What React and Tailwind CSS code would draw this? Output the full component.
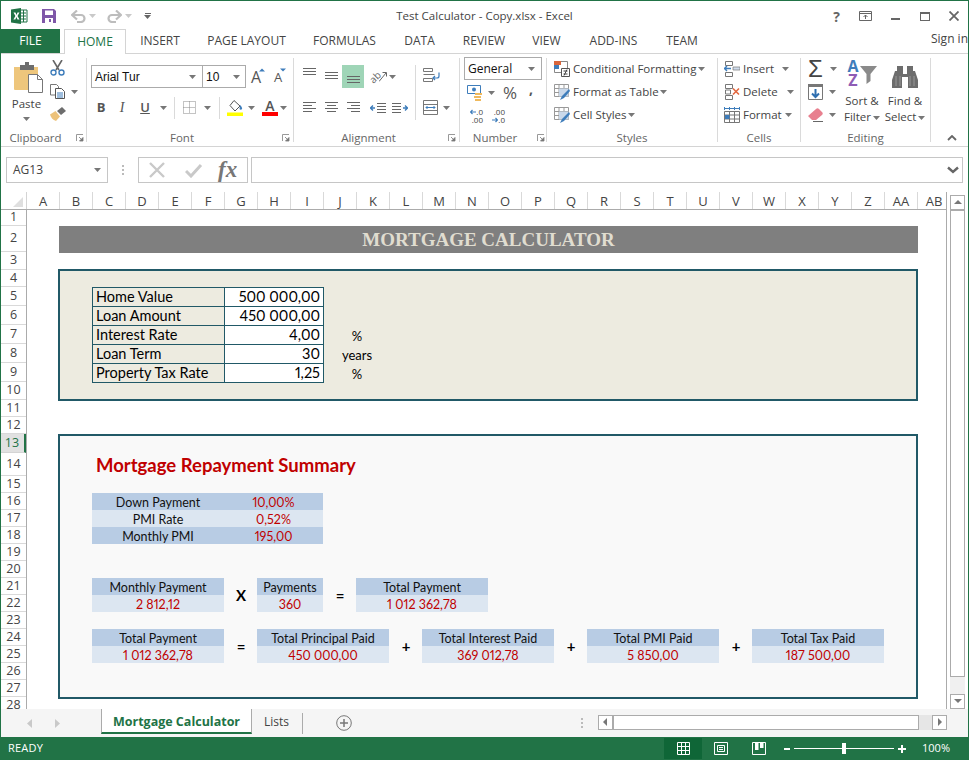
import React from "react";

const uiFont = "font-['Open_Sans','Noto_Sans',sans-serif]";
const cellFont = "font-['Lato','Noto_Sans',sans-serif]";

const Caret = ({ className = "", color = "#777" }) => (
  <svg width="7" height="4" viewBox="0 0 7 4" className={className}>
    <path d="M0 0h7L3.5 4z" fill={color} />
  </svg>
);

// horizontal text-lines icon used by the alignment buttons
const Lines = ({ rows, color = "#666", width = 15, height = 13 }) => (
  <svg width={width} height={height} viewBox={`0 0 ${width} ${height}`}>
    {rows.map(([x1, x2, y], i) => (
      <line key={i} x1={x1} x2={x2} y1={y + 0.5} y2={y + 0.5} stroke={color} />
    ))}
  </svg>
);

const Launcher = () => (
  <svg width="8" height="8" viewBox="0 0 8 8" className="shrink-0">
    <path d="M0.5 7V0.5H7" fill="none" stroke="#999" />
    <path d="M3 3l3 3M7 3.5V7H3.5z" fill="#777" stroke="#777" strokeWidth="0.8" />
  </svg>
);

const Group = ({ width, label, children, launcher = true, launcherClass = "pr-[3px]" }) => (
  <div className={`flex flex-col h-[92px] shrink-0 ${width}`}>
    <div className="h-[75px]">{children}</div>
    <div className={`relative h-[17px] flex items-center justify-center text-[11.5px] text-[#666] ${launcher ? "pr-[16px]" : ""}`}>
      {label}
      {launcher && <div className={`absolute right-0 top-[5px] flex ${launcherClass}`}><Launcher /></div>}
    </div>
  </div>
);

const Sep = () => <div className="w-px h-[84px] mt-[4px] bg-[#dadada] shrink-0" />;

const ExcelLogo = () => (
  <svg width="17" height="16" viewBox="0 0 17 16">
    <path d="M9 2h7v12H9z" fill="#fff" stroke="#217346" />
    <path d="M10 5h5M10 8h5M10 11h5M12.5 2v12" stroke="#217346" />
    <path d="M0 1.5 10 0v16L0 14.5z" fill="#217346" />
    <path d="M2.5 4.5h2L5.5 7l1-2.5h2L6.5 8l2 3.5h-2L5.4 9l-1 2.5h-2l2-3.5z" fill="#fff" />
  </svg>
);

const SaveIcon = () => (
  <svg width="14" height="14" viewBox="0 0 14 14">
    <path d="M0 0h12l2 2v12H0z" fill="#7f57a8" />
    <path d="M3 1.5h8v4.5H3z" fill="#fff" />
    <path d="M3 9h8v5H3z" fill="#fff" />
    <path d="M7 10h2v3H7z" fill="#7f57a8" />
  </svg>
);

const Undo = ({ flip }) => (
  <svg width="15" height="13" viewBox="0 0 15 13" className={flip ? "-scale-x-100" : ""}>
    <path d="M2 5h8a3.3 3.3 0 0 1 0 7H6" fill="none" stroke="#bdbdbd" strokeWidth="2.2" />
    <path d="M6 0.5 1 5l5 4.5" fill="none" stroke="#bdbdbd" strokeWidth="2.2" />
  </svg>
);

const PasteIcon = () => (
  <svg width="29" height="31" viewBox="0 0 29 31">
    <path d="M0 5h24v22a1 1 0 0 1-1 1H1a1 1 0 0 1-1-1z" fill="#eec67c" />
    <path d="M6 3h5V0h4v3h5v5H6z" fill="#6d6d6d" />
    <path d="M14.5 12.5h9l5 5v13h-14z" fill="#fff" stroke="#777" />
    <path d="M23.5 12.5v5h5" fill="none" stroke="#777" />
  </svg>
);

const CutIcon = () => (
  <svg width="15" height="16" viewBox="0 0 15 16">
    <path d="M3 0l6 10M12 0 6 10" stroke="#666" strokeWidth="1.6" fill="none" />
    <circle cx="3.5" cy="12.5" r="2.5" fill="none" stroke="#3e7dbb" strokeWidth="1.4" />
    <circle cx="11.5" cy="12.5" r="2.5" fill="none" stroke="#3e7dbb" strokeWidth="1.4" />
  </svg>
);

const CopyIcon = () => (
  <svg width="15" height="15" viewBox="0 0 15 15">
    <path d="M0.5 0.5h6l2 2V11h-8z" fill="#fff" stroke="#777" />
    <path d="M5.5 4.5h6l3 3v7h-9z" fill="#fff" stroke="#555" />
    <path d="M7 9h6M7 11h6M7 13h6" stroke="#3e7dbb" />
  </svg>
);

const PainterIcon = () => (
  <svg width="16" height="14" viewBox="0 0 16 14">
    <path d="M0 7.5 5.5 4 10 9.5 6 14C3 13 1 11 0 7.5z" fill="#edc27a" />
    <path d="M7 4l5-4 4 4-5 4z" fill="#6d6d6d" />
  </svg>
);

const GrowFont = ({ up }) => (
  <div className="flex items-start w-[18px] h-[18px]">
    <span className={up ? "text-[16px] leading-[20px] text-[#555]" : "text-[13px] leading-[21px] pl-[1px] text-[#555]"}>A</span>
    <svg width="6" height="4" viewBox="0 0 6 4" className="-ml-[2px] mt-[1px]">
      <path d={up ? "M0 3.5 3 0.5 6 3.5z" : "M0 0.5h6L3 3.5z"} fill="#3e7dbb" />
    </svg>
  </div>
);

const BordersIcon = () => (
  <svg width="13" height="13" viewBox="0 0 13 13">
    <path d="M0.5 0.5h12v12h-12zM6.5 0.5v12M0.5 6.5h12" fill="none" stroke="#888" strokeDasharray="1 1" />
  </svg>
);

const FillIcon = () => (
  <svg width="16" height="16" viewBox="0 0 16 16">
    <path d="M7 0.5 13 6l-5 5-5-5.5z" fill="#fff" stroke="#555" />
    <path d="M13 5c1.5 1.5 2.5 3 2 4s-2 1-2.5 0z" fill="#3e7dbb" />
    <path d="M0 12.5h16V16H0z" fill="#ffff00" />
  </svg>
);

const FontColorIcon = () => (
  <div className="w-[16px] flex flex-col items-center">
    <span className="h-[13px] text-[14px] leading-[13px] font-semibold text-[#555]">A</span>
    <div className="w-[16px] h-[4px] bg-[#ff0000]" />
  </div>
);

const OrientIcon = () => (
  <div className="flex items-center w-[18px] h-[18px]">
    <span className="-rotate-45 text-[10px] leading-[10px] text-[#666]">ab</span>
    <svg width="8" height="11" viewBox="0 0 8 11" className="-ml-[2px]">
      <path d="M0 10.5 7 2M3.500 1.500H7.500V5.500" fill="none" stroke="#666" />
    </svg>
  </div>
);

const WrapIcon = () => (
  <svg width="17" height="15" viewBox="0 0 17 15">
    <path d="M0.5 0.5h9v3h-9zM0.5 6.5h11M0.5 10.5h9v3h-9z" fill="none" stroke="#777" />
    <path d="M16 4.5V8a2 2 0 0 1-2 2H10M12 8l-2 2 2 2" fill="none" stroke="#3e7dbb" strokeWidth="1.2" />
  </svg>
);

const MergeIcon = () => (
  <svg width="15" height="15" viewBox="0 0 15 15">
    <path d="M0.5 0.5h14v14H0.5zM0.5 4.5h14M0.5 10.5h14" fill="none" stroke="#777" />
    <path d="M3 7.5h9M4.5 6l-1.5 1.5L4.5 9M10.5 6 12 7.5 10.5 9" fill="none" stroke="#3e7dbb" />
  </svg>
);

const IndentIcon = ({ flip }) => (
  <svg width="16" height="10" viewBox="0 0 16 10" className={flip ? "-scale-x-100" : ""}>
    <path d="M7 0.5h9M7 3.5h9M7 6.5h9M7 9.5h9" stroke="#666" fill="none" />
    <path d="M0 5h5M3 2.5 0.5 5 3 7.5" fill="none" stroke="#3e7dbb" strokeWidth="1.4" />
  </svg>
);

const AccountingIcon = () => (
  <svg width="16" height="16" viewBox="0 0 16 16">
    <path d="M0.5 0.5h13v8h-13z" fill="#fff" stroke="#3e7dbb" />
    <circle cx="7" cy="4.5" r="2" fill="#3e7dbb" />
    <path d="M8 8h7v2H8zM7 11h7v2H7zM8 14h6v2H8z" fill="#efb95d" />
  </svg>
);

const DecimalArrow = ({ right }) => (
  <svg width="6" height="6" viewBox="0 0 6 6" className="shrink-0">
    <path d={right ? "M0 3h5.500M3.500 1 5.500 3 3.500 5" : "M0.500 3H6M2.500 1 0.500 3 2.500 5"} fill="none" stroke="#3e7dbb" strokeWidth="1.2" />
  </svg>
);

const DecimalIcon = ({ more }) => (
  <div className="w-[16px] text-[8px] leading-[8px] text-[#444]">
    <div className="flex items-center justify-end h-[8px]">
      {!more && <DecimalArrow />}
      <span>{more ? ".00" : ".0"}</span>
    </div>
    <div className="flex items-center justify-end h-[8px]">
      {more && <DecimalArrow right />}
      <span>{more ? ".0" : ".00"}</span>
    </div>
  </div>
);

const CondFormatIcon = () => (
  <svg width="16" height="16" viewBox="0 0 16 16">
    <path d="M0.5 0.5h13v11h-13z" fill="#fff" stroke="#888" />
    <path d="M0 0h7v4H0z" fill="#d9663c" />
    <path d="M0 4h5v4H0z" fill="#3e7dbb" />
    <path d="M7.5 7.5h8v8h-8z" fill="#fff" stroke="#555" />
    <path d="M9.5 10h4M9.5 13h4M10 14.5l3-6" stroke="#444" fill="none" />
  </svg>
);

const TableStyleIcon = () => (
  <svg width="16" height="16" viewBox="0 0 16 16">
    <path d="M0.5 0.5h14v12h-14zM0.5 4.5h14M0.5 8.5h14M5 0.5v12M10 0.5v12" fill="#fff" stroke="#999" />
    <path d="M5 4.5h9.5v8H5z" fill="#c9d8ea" />
    <path d="M15 5 8 12l-2 4 4-2 6-7z" fill="#3e7dbb" />
  </svg>
);

const InsertCellIcon = () => (
  <svg width="16" height="16" viewBox="0 0 16 16">
    <path d="M1.5 0.5h7v4h-7zM1.5 11.5h7v4h-7z" fill="#fff" stroke="#777" />
    <path d="M9 6h7v3H9z" fill="#cfdcec" stroke="#777" strokeWidth="0.7" />
    <path d="M0 7.5h7M3 5 0.5 7.5 3 10" fill="none" stroke="#3e7dbb" strokeWidth="1.4" />
  </svg>
);

const DeleteCellIcon = () => (
  <svg width="16" height="16" viewBox="0 0 16 16">
    <path d="M1.5 0.5h7v4h-7zM1.5 11.5h7v4h-7zM1.5 6h5v4h-5z" fill="#fff" stroke="#777" />
    <path d="M9 4.5l6 6M15 4.5l-6 6" stroke="#e2673f" strokeWidth="1.6" />
  </svg>
);

const FormatCellIcon = () => (
  <svg width="16" height="16" viewBox="0 0 16 16">
    <path d="M0.5 4.5h15v11h-15zM0.5 8h15M0.5 12h15M5.5 4.5v11M10.5 4.5v11" fill="#fff" stroke="#777" />
    <path d="M1 8h4.500v4H1z" fill="#3e7dbb" />
    <path d="M0.5 0v3M5.5 0v3M10.5 0v3M15.5 0v3M1 1.5h14" stroke="#3e7dbb" fill="none" />
  </svg>
);

const FillDownIcon = () => (
  <svg width="15" height="16" viewBox="0 0 15 16">
    <path d="M0.5 0.5h14v15h-14z" fill="#fff" stroke="#777" />
    <path d="M0 0h15v3H0z" fill="#777" />
    <path d="M7.5 5v8M4 9.5l3.5 3.5L11 9.5" fill="none" stroke="#2f6fb0" strokeWidth="2" />
  </svg>
);

const EraserIcon = () => (
  <svg width="16" height="14" viewBox="0 0 16 14">
    <path d="M0 8 8 1c1-1 2-1 3 0l3 3c1 1 1 2 0 3l-6 5H4z" fill="#e8808f" />
    <path d="M5 13.5h10" stroke="#666" />
  </svg>
);

const SortFilterIcon = () => (
  <div className="flex h-[29px] w-[30px]">
    <div className="w-[12px] flex flex-col items-center font-bold text-[16px] leading-[14px]">
      <span className="text-[#3e7dbb]">A</span>
      <span className="text-[#8e5cb5]">Z</span>
    </div>
    <svg width="17" height="18" viewBox="0 0 17 18" className="mt-[7px] ml-[1px]">
      <path d="M0 0h17l-6.500 8v7l-4 3V8z" fill="#8a8a8a" />
    </svg>
  </div>
);

const BinocularsIcon = () => (
  <svg width="26" height="24" viewBox="0 0 26 24">
    <path d="M5 2h6v5H5zM15 2h6v5h-6zM3 7h8v3h4V7h8l3 9v8H16V13h-6v11H0v-8z" fill="#6d6d6d" />
    <path d="M4 12v10M8 12v10M18 12v10M22 12v10" stroke="#999" />
  </svg>
);

const SmallCross = ({ color = "#c9c9c9" }) => (
  <svg width="16" height="16" viewBox="0 0 16 16">
    <path d="M1 1l14 14M15 1 1 15" stroke={color} strokeWidth="2.4" />
  </svg>
);

const ScrollBtn = ({ dir, className = "" }) => {
  const shapes = {
    up: "M1 6 5 2l4 4z",
    down: "M1 2h8L5 6z",
    left: "M6 1v8L2 5z",
    right: "M3 1v8l4-4z",
  };
  return (
    <div className={`w-[15px] h-[15px] shrink-0 border border-[#ababab] bg-white flex items-center justify-center ${className}`}>
      <svg width="10" height="10" viewBox="0 0 10 10"><path d={shapes[dir]} fill="#777" /></svg>
    </div>
  );
};

const tabs = [
  ["INSERT", "w-[68px]"],
  ["PAGE LAYOUT", "w-[105px]"],
  ["FORMULAS", "w-[91px]"],
  ["DATA", "w-[59px]"],
  ["REVIEW", "w-[70px]"],
  ["VIEW", "w-[55px]"],
  ["ADD-INS", "w-[79px]"],
  ["TEAM", "w-[58px]"],
];

const columns = ["A", "B", "C", "D", "E", "F", "G", "H", "I", "J", "K", "L", "M", "N", "O", "P", "Q", "R", "S", "T", "U", "V", "W", "X", "Y", "Z", "AA", "AB"];

const rowHeights = [16, 26, 18, 17, 19, 19, 19, 19, 19, 18, 17, 17, 19, 23, 17, 17, 17, 17, 17, 17, 17, 17, 17, 17, 17, 17, 17, 17];

const inputs = [
  ["Home Value", "500 000,00", ""],
  ["Loan Amount", "450 000,00", ""],
  ["Interest Rate", "4,00", "%"],
  ["Loan Term", "30", "years"],
  ["Property Tax Rate", "1,25", "%"],
];

const summary = [
  ["Down Payment", "10,00%", "bg-[#b8cce4]"],
  ["PMI Rate", "0,52%", "bg-[#dce6f1]"],
  ["Monthly PMI", "195,00", "bg-[#b8cce4]"],
];

const Block = ({ title, value, width = "w-[132px]" }) => (
  <div className={`${width} shrink-0 text-center text-[12.5px] proportional-nums`}>
    <div className="h-[17px] bg-[#b8cce4] text-[#111] leading-[20px]">{title}</div>
    <div className="h-[17px] bg-[#dce6f1] text-[#c00000] leading-[19px]">{value}</div>
  </div>
);

const Op = ({ children }) => (
  <div className="w-[33px] shrink-0 flex items-center justify-center pl-[1px] text-[15px] font-bold text-black">{children}</div>
);

function Ribbon() {
  return (
    <div className="flex h-[93px] border-b border-[#d4d4d4] text-[#444] text-[11.5px]">
      <Group width="w-[85px]" label="Clipboard" launcherClass="pr-[2px]">
        <div className="flex">
          <div className="w-[48px] flex flex-col pt-[8px]">
            <div className="pl-[13px]"><PasteIcon /></div>
            <div className="mt-[3px] leading-[16px] text-center pl-[3px]">Paste</div>
            <div className="flex justify-center pl-[3px]"><Caret className="mt-[5px]" /></div>
          </div>
          <div className="flex flex-col pt-[6px] pl-[1px]">
            <div className="h-[24px]"><CutIcon /></div>
            <div className="h-[23px] flex items-start gap-[3px]"><CopyIcon /><Caret className="ml-[3px] mt-[6px]" /></div>
            <div className="h-[23px]"><PainterIcon /></div>
          </div>
        </div>
      </Group>
      <Sep />
      <Group width="w-[206px]" label="Font">
        <div className="flex pt-[11px] pl-[4px] h-[34px]">
          <div className="w-[112px] h-[23px] border border-[#ababab] flex items-center justify-between pl-[3px] pr-[6px] text-[#111] text-[12px]">
            <span className="font-['Liberation_Sans',sans-serif]">Arial Tur</span><Caret />
          </div>
          <div className="w-[43px] h-[23px] border border-l-0 border-[#ababab] flex items-center justify-between pl-[3px] pr-[5px] text-[#111] text-[12px]">
            <span className="font-['Liberation_Sans',sans-serif]">10</span><Caret />
          </div>
          <div className="ml-[5px] pt-[2px]"><GrowFont up /></div>
          <div className="ml-[4px] pt-[2px]"><GrowFont /></div>
        </div>
        <div className="flex items-center h-[23px] mt-[8px] pl-[4px]">
          <div className="w-[20px] text-center font-bold text-[13px] text-[#555]">B</div>
          <div className="w-[22px] text-center italic text-[14px] text-[#555] font-['Liberation_Serif',serif]">I</div>
          <div className="w-[24px] text-center underline text-[13px] text-[#555] font-semibold">U</div>
          <Caret className="ml-[3px]" />
          <div className="w-px h-[22px] bg-[#dadada] ml-[7px]" />
          <div className="ml-[8px]"><BordersIcon /></div>
          <Caret className="ml-[8px]" />
          <div className="w-px h-[22px] bg-[#dadada] ml-[8px]" />
          <div className="ml-[7px]"><FillIcon /></div>
          <Caret className="ml-[5px]" />
          <div className="ml-[7px]"><FontColorIcon /></div>
          <Caret className="ml-[2px]" />
        </div>
      </Group>
      <Sep />
      <Group width="w-[165px]" label="Alignment">
        <div className="flex pt-[11px] pl-[4px] h-[34px]">
          <div className="w-[22px] h-[23px] flex justify-center pt-[3px]"><Lines rows={[[1, 14, 0], [1, 14, 3], [1, 14, 6]]} /></div>
          <div className="w-[22px] h-[23px] flex justify-center pt-[5px]"><Lines rows={[[1, 14, 2], [1, 14, 5], [1, 14, 8]]} /></div>
          <div className="w-[22px] h-[23px] flex justify-center pt-[8px] bg-[#9fd5b7]"><Lines rows={[[1, 14, 3], [1, 14, 6], [1, 14, 9]]} /></div>
          <div className="w-[36px] h-[23px] flex items-center pl-[5px] gap-[2px]"><OrientIcon /><Caret /></div>
          <div className="w-px h-[55px] bg-[#dadada] ml-[15px]" />
          <div className="ml-[7px] pt-[3px]"><WrapIcon /></div>
        </div>
        <div className="flex items-center h-[23px] mt-[8px] pl-[4px]">
          <div className="w-[22px] flex justify-center"><Lines rows={[[1, 14, 1], [1, 10, 4], [1, 14, 7], [1, 10, 10]]} /></div>
          <div className="w-[22px] flex justify-center"><Lines rows={[[1, 14, 1], [3, 12, 4], [1, 14, 7], [3, 12, 10]]} /></div>
          <div className="w-[22px] flex justify-center"><Lines rows={[[1, 14, 1], [5, 14, 4], [1, 14, 7], [5, 14, 10]]} /></div>
          <div className="ml-[6px]"><IndentIcon /></div>
          <div className="ml-[6px]"><IndentIcon flip /></div>
          <div className="ml-[15px]"><MergeIcon /></div>
          <Caret className="ml-[5px]" />
        </div>
      </Group>
      <Sep />
      <Group width="w-[86px]" label="Number" launcherClass="pr-[1px]">
        <div className="pt-[3px] pl-[4px]">
          <div className="w-[78px] h-[23px] border border-[#ababab] flex items-center justify-between pl-[3px] pr-[6px] text-[#111] text-[12px]">
            General<Caret />
          </div>
          <div className="flex items-center h-[23px] mt-[1px] pl-[3px]">
            <AccountingIcon />
            <Caret className="ml-[5px]" />
            <span className="ml-[8px] text-[17px] text-[#555]">%</span>
            <span className="ml-[12px] text-[14px] font-bold text-[#555] leading-[10px] -mt-[8px]">,</span>
          </div>
          <div className="flex items-center h-[23px] pl-[3px]">
            <DecimalIcon />
            <div className="ml-[6px]"><DecimalIcon more /></div>
          </div>
        </div>
      </Group>
      <Sep />
      <Group width="w-[170px]" label="Styles" launcher={false}>
        <div className="pt-[3px] pl-[7px] text-[11.5px]">
          <div className="flex items-center h-[23px] gap-[3px]"><CondFormatIcon />Conditional Formatting<Caret className="-ml-[1px]" /></div>
          <div className="flex items-center h-[23px] gap-[3px]"><TableStyleIcon />Format as Table<Caret className="-ml-[2px]" /></div>
          <div className="flex items-center h-[23px] gap-[3px]"><TableStyleIcon />Cell Styles<Caret className="-ml-[2px]" /></div>
        </div>
      </Group>
      <Sep />
      <Group width="w-[82px]" label="Cells" launcher={false}>
        <div className="pt-[3px] pl-[6px]">
          <div className="flex items-center h-[23px] gap-[3px]"><InsertCellIcon />Insert<Caret className="ml-[5px]" /></div>
          <div className="flex items-center h-[23px] gap-[3px]"><DeleteCellIcon />Delete<Caret className="ml-[6px]" /></div>
          <div className="flex items-center h-[23px] gap-[3px]"><FormatCellIcon />Format<Caret className="ml-0" /></div>
        </div>
      </Group>
      <Sep />
      <Group width="w-[129px]" label="Editing" launcher={false}>
        <div className="flex pl-[7px] pt-[3px]">
          <div className="flex flex-col w-[33px]">
            <div className="flex items-center h-[23px] gap-[6px]"><span className="text-[24px] leading-[21px] w-[16px] text-[#444] font-['Liberation_Sans',sans-serif]">Σ</span><Caret /></div>
            <div className="flex items-center h-[23px] gap-[6px]"><FillDownIcon /><Caret /></div>
            <div className="flex items-center h-[23px] gap-[5px]"><EraserIcon /><Caret /></div>
          </div>
          <div className="w-[42px] flex flex-col items-center">
            <div className="mt-[2px]"><SortFilterIcon /></div>
            <div className="text-center leading-[16px] mt-[5px] whitespace-nowrap">Sort &amp;<br />Filter<Caret className="inline ml-[2px]" /></div>
          </div>
          <div className="w-[44px] flex flex-col items-center">
            <div className="mt-[7px]"><BinocularsIcon /></div>
            <div className="text-center leading-[16px] mt-[5px] whitespace-nowrap">Find &amp;<br />Select<Caret className="inline ml-[2px]" /></div>
          </div>
        </div>
      </Group>
      <Sep />
      <div className="flex-1 flex justify-center items-end pb-[5px] pl-[4px]">
        <svg width="10" height="6" viewBox="0 0 10 6"><path d="M1 5l4-4 4 4" fill="none" stroke="#666" strokeWidth="1.8" /></svg>
      </div>
    </div>
  );
}

function FormulaBar() {
  return (
    <div className="flex h-[26px] mt-[10px] pl-[5px] pr-[5px] text-[#444]">
      <div className="w-[102px] border border-[#c6c6c6] flex items-center justify-between pl-[6px] pr-[6px] text-[12px]">
        AG13<Caret />
      </div>
      <div className="w-[30px] flex flex-col items-center justify-center gap-[2px]">
        <div className="w-[2px] h-[2px] bg-[#bbb]" />
        <div className="w-[2px] h-[2px] bg-[#bbb]" />
        <div className="w-[2px] h-[2px] bg-[#bbb]" />
      </div>
      <div className="w-[110px] border border-[#c6c6c6] flex items-center pl-[10px]">
        <SmallCross />
        <svg width="18" height="15" viewBox="0 0 18 15" className="ml-[20px]">
          <path d="M1 8l5 5L16 2" fill="none" stroke="#c9c9c9" strokeWidth="3" />
        </svg>
        <span className="ml-[15px] italic font-bold text-[23px] leading-[20px] text-[#777] font-['Liberation_Serif',serif]">fx</span>
      </div>
      <div className="flex-1 ml-[3px] border border-[#c6c6c6] flex items-center justify-end pr-[3px]">
        <svg width="12" height="8" viewBox="0 0 12 8"><path d="M1 1.5l5 4.5 5-4.5" fill="none" stroke="#666" strokeWidth="2.4" /></svg>
      </div>
    </div>
  );
}

function Sheet() {
  return (
    <div className="flex h-[517px] mt-[9px]">
      <div className="flex-1 min-w-0 flex flex-col overflow-hidden border-r border-[#ababab]">
        <div className="flex h-[18px] shrink-0 border-b border-[#ababab]">
          <div className="w-[26px] shrink-0 border-r border-[#d4d4d4] relative">
            <svg width="10" height="10" viewBox="0 0 10 10" className="absolute right-[3px] bottom-[2px]"><path d="M10 0v10H0z" fill="#dfdfdf" /></svg>
          </div>
          {columns.map((c) => (
            <div key={c} className="w-[33px] shrink-0 border-r border-[#d9d9d9] text-center text-[13px] leading-[18px] text-[#444]">{c}</div>
          ))}
        </div>
        <div className="flex flex-1 min-h-0 overflow-hidden">
          <div className="w-[26px] shrink-0 border-r border-[#ababab]">
            {rowHeights.map((h, i) => (
              <div
                key={i}
                style={{ height: h }}
                className={
                  i === 12
                    ? "flex items-center justify-center bg-[#e1e1e1] border-r-2 border-b border-[#217346] border-b-[#d4d4d4] text-[12.5px] text-[#217346] pr-[1px]"
                    : "flex items-center justify-center border-b border-[#d9d9d9] text-[12.5px] text-[#444]"
                }
              >
                {i + 1}
              </div>
            ))}
          </div>
          <div className={`flex-1 min-w-0 pl-[32px] pt-[16px] ${cellFont}`}>
            <div className="w-[859px] h-[27px] bg-[#7f7f7f] text-center font-bold text-[19px] leading-[28px] text-[#e0ddd0] font-['Liberation_Serif',serif]">
              MORTGAGE CALCULATOR
            </div>
            <div className="w-[860px] -ml-px mt-[16px] h-[132px] border-2 border-[#215967] bg-[#edebe0] pt-[16px] pl-[32px]">
              <div className="w-[232px] border-t border-l border-[#215967]">
                {inputs.map(([label, value, unit]) => (
                  <div key={label} className="relative flex h-[19px] text-[14.5px] leading-[18px] text-black proportional-nums">
                    <div className="w-[132px] border-r border-b border-[#215967] pl-[3px] whitespace-nowrap">{label}</div>
                    <div className="w-[99px] border-r border-b border-[#215967] bg-white text-right pr-[3px] whitespace-nowrap">{value}</div>
                    <div className="absolute left-[231px] w-[66px] text-center text-[13px] leading-[21px]">{unit}</div>
                  </div>
                ))}
              </div>
            </div>
            <div className="w-[860px] -ml-px mt-[33px] h-[265px] border-2 border-[#215967] bg-[#f9f9f9] pl-[32px] pt-[17px]">
              <div className="h-[23px] pl-[4px] text-[18.5px] leading-[25px] font-bold text-[#c00000]">Mortgage Repayment Summary</div>
              <div className="w-[231px] mt-[17px] text-[12.5px] leading-[20px] proportional-nums">
                {summary.map(([label, value, bg]) => (
                  <div key={label} className={`flex h-[17px] ${bg}`}>
                    <div className="w-[132px] text-center text-[#111]">{label}</div>
                    <div className="w-[99px] text-center text-[#c00000]">{value}</div>
                  </div>
                ))}
              </div>
              <div className="flex mt-[34px]">
                <Block title="Monthly Payment" value="2 812,12" />
                <Op>X</Op>
                <Block title="Payments" value="360" width="w-[66px]" />
                <Op>=</Op>
                <Block title="Total Payment" value="1 012 362,78" />
              </div>
              <div className="flex mt-[17px]">
                <Block title="Total Payment" value="1 012 362,78" />
                <Op>=</Op>
                <Block title="Total Principal Paid" value="450 000,00" />
                <Op>+</Op>
                <Block title="Total Interest Paid" value="369 012,78" />
                <Op>+</Op>
                <Block title="Total PMI Paid" value="5 850,00" />
                <Op>+</Op>
                <Block title="Total Tax Paid" value="187 500,00" />
              </div>
            </div>
          </div>
        </div>
      </div>
      <div className="w-[21px] shrink-0 flex flex-col pl-[3px] pr-[3px] pt-[3px] bg-white">
        <ScrollBtn dir="up" />
        <div className="h-[467px] border border-[#ababab] bg-white" />
        <div className="flex-1 bg-[#f0f0f0]" />
        <ScrollBtn dir="down" />
      </div>
    </div>
  );
}

function SheetTabs() {
  return (
    <div className="flex items-center h-[28px] bg-[#f5f5f5] text-[#444]">
      <div className="w-[100px] flex items-center pl-[26px] gap-[23px]">
        <svg width="5" height="9" viewBox="0 0 5 9"><path d="M5 0v9L0 4.5z" fill="#c9c9c9" /></svg>
        <svg width="5" height="9" viewBox="0 0 5 9"><path d="M0 0v9l5-4.5z" fill="#c9c9c9" /></svg>
      </div>
      <div className="w-[151px] h-[25px] -mt-[3px] bg-white border-x border-[#ababab] border-b-2 border-b-[#217346] text-center font-bold text-[12.5px] leading-[25px] text-[#217346]">
        Mortgage Calculator
      </div>
      <div className="w-[51px] h-[21px] border-r border-[#ababab] text-[12px] leading-[17px] text-center pr-[1px]">Lists</div>
      <svg width="16" height="16" viewBox="0 0 16 16" className="ml-[33px]">
        <circle cx="8" cy="8" r="7.3" fill="none" stroke="#777" />
        <path d="M8 4v8M4 8h8" stroke="#777" strokeWidth="1.5" />
      </svg>
      <div className="ml-[229px] flex flex-col gap-[2px]">
        <div className="w-[2px] h-[2px] bg-[#bbb]" />
        <div className="w-[2px] h-[2px] bg-[#bbb]" />
        <div className="w-[2px] h-[2px] bg-[#bbb]" />
      </div>
      <div className="ml-[15px] flex w-[349px] -mt-[2px]">
        <ScrollBtn dir="left" />
        <div className="w-[306px] border border-[#ababab] bg-white" />
        <div className="flex-1 bg-[#e6e6e6]" />
        <ScrollBtn dir="right" />
      </div>
    </div>
  );
}

function StatusBar() {
  return (
    <div className="flex items-center h-[23px] bg-[#217346] text-white text-[11px] -mx-px">
      <div className="pl-[8px] flex-1 tracking-[0.2px]">READY</div>
      <div className="w-[38px] h-[21px] bg-[#0f6637] flex items-center justify-center">
        <svg width="13" height="13" viewBox="0 0 13 13"><path d="M0.5 0.5h12v12h-12zM4.5 0.5v12M8.5 0.5v12M0.5 4.5h12M0.5 8.5h12" fill="none" stroke="#fff" /></svg>
      </div>
      <div className="w-[38px] flex justify-center">
        <svg width="14" height="13" viewBox="0 0 14 13"><path d="M0.5 0.5h13v12h-13z" fill="none" stroke="#fff" /><path d="M3.5 3.5h7v6h-7zM5 5.5h4M5 7.5h4" fill="none" stroke="#fff" /></svg>
      </div>
      <div className="w-[38px] flex justify-center">
        <svg width="14" height="13" viewBox="0 0 14 13"><path d="M0.5 0.5h13v12h-13z" fill="none" stroke="#fff" /><path d="M3 1h3.5v7H3zM8 1h3.5v5H8z" fill="#fff" /></svg>
      </div>
      <div className="ml-[6px] w-[6px] h-[2px] bg-white" />
      <div className="relative ml-[4px] w-[100px] h-px bg-white">
        <div className="absolute left-[48px] -top-[5px] w-[4px] h-[11px] bg-white" />
      </div>
      <svg width="8" height="8" viewBox="0 0 8 8" className="ml-[4px]"><path d="M4 0v8M0 4h8" stroke="#fff" strokeWidth="2" /></svg>
      <div className="w-[63px] text-right pr-[19px]">100%</div>
    </div>
  );
}

export default function App() {
  return (
    <div className={`w-[969px] h-[760px] overflow-hidden bg-white border-x border-t border-[#217346] ${uiFont}`}>
      {/* title bar */}
      <div className="grid grid-cols-[1fr_auto_1fr] h-[28px] text-[#444]">
        <div className="flex items-center pl-[10px] pt-[2px]">
          <ExcelLogo />
          <div className="ml-[14px]"><SaveIcon /></div>
          <div className="ml-[15px] flex items-center gap-[3px]"><Undo /><Caret color="#c9c9c9" /></div>
          <div className="ml-[11px] flex items-center gap-[3px]"><Undo flip /><Caret color="#c9c9c9" /></div>
          <div className="ml-[12px] flex flex-col items-center gap-[1px]">
            <div className="w-[6px] h-px bg-[#666]" />
            <Caret color="#666" />
          </div>
        </div>
        <div className="flex items-center text-[11.5px] pt-[2px]">Test Calculator - Copy.xlsx - Excel</div>
        <div className="flex items-center justify-end pt-[2px] pr-[9px] text-[#666]">
          <span className="font-bold text-[14px] mr-[19px]">?</span>
          <svg width="13" height="10" viewBox="0 0 13 10" className="mr-[19px]"><path d="M0.5 0.5h12v9h-12zM0.5 2.5h12M6.5 8V4M4.5 6l2-2 2 2" fill="none" stroke="#666" /></svg>
          <div className="w-[9px] h-[2px] bg-[#666] mt-[5px] mr-[20px]" />
          <div className="w-[10px] h-[9px] border border-t-2 border-[#666] mr-[19px]" />
          <svg width="10" height="10" viewBox="0 0 10 10"><path d="M0.5 0.5l9 9M9.5 0.5l-9 9" stroke="#666" strokeWidth="1.8" /></svg>
        </div>
      </div>
      {/* ribbon tabs */}
      <div className="flex h-[25px] relative text-[12px] text-[#444]">
        <div className="w-[59px] h-[24px] bg-[#217346] text-white flex items-center justify-center">FILE</div>
        <div className="ml-[4px] w-[62px] h-[25px] bg-white border-x border-t border-[#d4d4d4] text-[#217346] flex items-center justify-center z-10">HOME</div>
        {tabs.map(([name, w]) => (
          <div key={name} className={`${w} h-[24px] flex items-center justify-center`}>{name}</div>
        ))}
        <div className="flex-1 flex justify-end pt-[1px] text-right overflow-hidden whitespace-nowrap">Sign in</div>
        <div className="absolute left-0 right-0 bottom-0 h-px bg-[#d4d4d4]" />
      </div>
      <Ribbon />
      <FormulaBar />
      <Sheet />
      <SheetTabs />
      <StatusBar />
    </div>
  );
}
